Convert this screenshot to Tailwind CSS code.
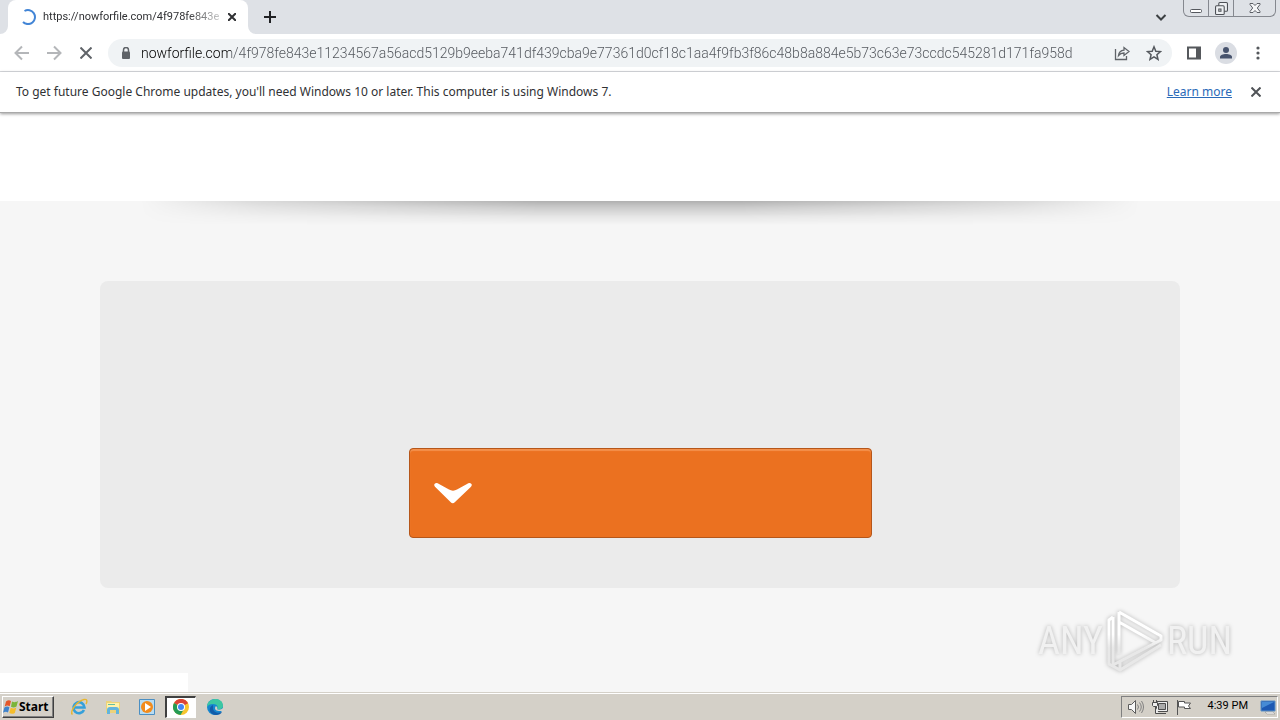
<!DOCTYPE html>
<html lang="en">
<head>
  <meta charset="UTF-8">
  <meta name="viewport" content="width=device-width, initial-scale=1.0">
  <title>nowforfile.com</title>
  <script src="https://cdn.jsdelivr.net/npm/@tailwindcss/browser@4"></script>
</head>
<body class="relative flex h-screen flex-col overflow-hidden bg-[#f6f6f6] font-[Roboto,'Noto_Sans',sans-serif] text-[#303134]">

  <!-- Tab strip -->
  <header class="relative flex h-[34px] shrink-0 items-stretch bg-[#dee1e6] pl-2">
    <div class="relative flex w-60 items-center rounded-t-lg bg-white pr-[6px] pl-3">
      <svg class="absolute bottom-0 -left-2 size-2" viewBox="0 0 8 8"><path d="M8 0v8H0a8 8 0 0 0 8-8z" fill="#fff"/></svg>
      <svg class="absolute -right-2 bottom-0 size-2" viewBox="0 0 8 8"><path d="M0 0v8h8a8 8 0 0 1-8-8z" fill="#fff"/></svg>
      <svg class="size-4 shrink-0" viewBox="0 0 16 16" fill="none" stroke="#4285d6" stroke-width="2"><path d="M4.500 2A7 7 0 1 1 3 13"/></svg>
      <span class="ml-[7px] flex-1 text-[11px] whitespace-nowrap [mask-image:linear-gradient(to_right,#000_80%,#0003)]">https://nowforfile.com/4f978fe843e</span>
      <button class="flex size-5 items-center justify-center" aria-label="Close tab">
        <svg class="size-2" viewBox="0 0 8 8" stroke="#303134" stroke-width="2"><path d="M0 0l8 8M8 0L0 8"/></svg>
      </button>
    </div>
    <button class="ml-2 flex w-7 items-center justify-center" aria-label="New tab">
      <svg class="size-3" viewBox="0 0 12 12" stroke="#202124" stroke-width="2"><path d="M6 0v12M0 6h12"/></svg>
    </button>
    <button class="ml-auto flex w-7 items-center justify-center" aria-label="Search tabs">
      <svg class="size-3" viewBox="0 0 12 12" fill="none" stroke="#3c4043" stroke-width="2"><path d="M1.500 4L6 8.500 10.500 4"/></svg>
    </button>
    <div class="mr-1 ml-2 flex h-[17px] w-[93px] rounded-b-md border border-t-0 border-[#85888f]">
      <button class="flex flex-1 items-end justify-center pb-[3px]" aria-label="Minimize">
        <svg class="h-1 w-3" viewBox="0 0 12 4" fill="#fff" stroke="#55585e"><rect x=".5" y=".5" width="11" height="3" rx="1"/></svg>
      </button>
      <button class="flex flex-1 items-center justify-center border-x border-[#85888f]" aria-label="Restore">
        <svg class="size-[13px]" viewBox="0 0 12 12" fill="#eef0f3" stroke="#4d5056"><rect x="3.500" y=".5" width="8" height="8" rx="1"/><rect x=".5" y="3.500" width="8" height="8" rx="1"/><path d="M3.500 6.500h2v2h-2z"/></svg>
      </button>
      <button class="flex w-[41px] items-center justify-center" aria-label="Close">
        <svg class="h-3 w-3" viewBox="0 0 12 12" fill="#f5f6f8" stroke="#5c5f66"><path d="M1 1.500h3l2 2 2-2h3v1L8.300 6l2.700 3.500v1H8l-2-2-2 2H1v-1L3.700 6 1 2.500z"/></svg>
      </button>
    </div>
  </header>

  <!-- Toolbar -->
  <nav class="flex h-[38px] shrink-0 items-center border-b border-[#dadce0] bg-white pr-2 pl-2">
    <button class="flex w-7 justify-center" aria-label="Back">
      <svg class="size-4" viewBox="0 0 16 16" fill="none" stroke="#b4b6b9" stroke-width="2"><path d="M15 8H2M8 1.500L1.500 8 8 14.500"/></svg>
    </button>
    <button class="ml-1 flex w-7 justify-center" aria-label="Forward">
      <svg class="size-4" viewBox="0 0 16 16" fill="none" stroke="#b4b6b9" stroke-width="2"><path d="M1 8h13M8 1.500L14.500 8 8 14.500"/></svg>
    </button>
    <button class="ml-1 flex w-7 justify-center" aria-label="Stop loading">
      <svg class="size-3" viewBox="0 0 12 12" stroke="#5f6368" stroke-width="2"><path d="M.5.5l11 11M11.500.5l-11 11"/></svg>
    </button>
    <div class="ml-2 flex h-7 flex-1 items-center rounded-full bg-[#f0f3f5] pr-[2px] pl-3">
      <svg class="h-3 w-3 shrink-0" viewBox="0 0 12 12"><path d="M3.500 5V3a2.500 2.500 0 0 1 5 0v2" fill="none" stroke="#5f6368" stroke-width="1.500"/><rect x="2" y="4.500" width="8" height="7.500" rx="1" fill="#5f6368"/></svg>
      <input type="text" aria-label="Address" spellcheck="false" class="ml-[9px] min-w-0 flex-1 bg-[linear-gradient(to_right,#000_90px,#50545a_90px)] bg-clip-text text-sm font-light text-transparent outline-none" value="nowforfile.com/4f978fe843e11234567a56acd5129b9eeba741df439cba9e77361d0cf18c1aa4f9fb3f86c48b8a884e5b73c63e73ccdc545281d171fa958d">
      <button class="flex w-8 justify-center" aria-label="Share">
        <svg class="size-4" viewBox="0 0 16 16" fill="none" stroke="#5f6368" stroke-width="1.300"><path d="M1.500 4v10.500h11V11M4.500 10.500C5 6.500 7 5.500 10 5.200V2.500l5 4-5 4V8C7.500 8 6 8.500 4.500 10.500z"/></svg>
      </button>
      <button class="flex w-8 justify-center" aria-label="Bookmark this tab">
        <svg class="size-4" viewBox="0 0 16 16" fill="none" stroke="#55595e" stroke-width="1.500"><path d="M8 1.800l1.800 4.400 4.700.4-3.600 3.100 1.100 4.600L8 11.800l-4 2.500 1.100-4.600-3.600-3.100 4.700-.4z"/></svg>
      </button>
    </div>
    <button class="ml-2 flex w-7 justify-center" aria-label="Side panel">
      <svg class="size-4" viewBox="0 0 16 16"><path d="M2 2.500h12v11H2z" fill="none" stroke="#55585c" stroke-width="2"/><path d="M10 2h4v12h-4z" fill="#55585c"/></svg>
    </button>
    <button class="ml-1 flex w-7 justify-center" aria-label="Profile">
      <svg class="size-[22px]" viewBox="0 0 22 22"><circle cx="11" cy="11" r="11" fill="#dadde3"/><circle cx="11" cy="8" r="3" fill="#47536d"/><path d="M5 16.500v-1.500c0-2 3-3 6-3s6 1 6 3v1.500z" fill="#47536d"/></svg>
    </button>
    <button class="ml-1 flex w-7 justify-center" aria-label="Menu">
      <svg class="size-4" viewBox="0 0 16 16" fill="#55585c"><circle cx="8" cy="3" r="1.600"/><circle cx="8" cy="8" r="1.600"/><circle cx="8" cy="13" r="1.600"/></svg>
    </button>
  </nav>

  <!-- Infobar -->
  <div class="relative z-10 flex h-[41px] shrink-0 items-center border-b border-[#a9a9a9] bg-white pr-4 pl-4 font-['Noto_Sans',sans-serif] text-[12px] shadow-[0_1px_3px_#0006]">
    <p>To get future Google Chrome updates, you'll need Windows 10 or later. This computer is using Windows 7.</p>
    <a href="#" class="ml-auto text-[#2a6ab8] underline">Learn more</a>
    <button class="ml-4 flex w-4 justify-center" aria-label="Dismiss">
      <svg class="size-[10px]" viewBox="0 0 10 10" stroke="#505357" stroke-width="2"><path d="M.5.5l9 9M9.500.5l-9 9"/></svg>
    </button>
  </div>

  <!-- Page -->
  <main class="relative flex-1">
    <div class="h-[88px] bg-white"></div>
    <div class="mx-auto h-6 w-[1000px] max-w-full bg-[linear-gradient(#00000048,#0000002e_25%,#00000010_65%,transparent)] [mask-image:linear-gradient(to_right,transparent,#0006_12%,#000_40%,#000_60%,#0006_88%,transparent)]"></div>
    <section class="mx-[100px] mt-14 flex h-[307px] items-end justify-center rounded-lg bg-[#ebebeb] pb-[50px]">
      <button class="flex h-[90px] w-[463px] items-center rounded border border-[#b5561a] bg-[#eb7120] pl-[23px] shadow-[inset_0_2px_1px_#f4914c]" aria-label="Download">
        <svg class="h-6 w-10" viewBox="0 0 40 24" fill="#fff"><path d="M1.500 3C3 1.500 4.500 2 6 3l10 5.500c2.500 1.500 5.500 1.500 8 0L34 3c1.500-1 3-1.500 4.500 0 .7 1.200 0 2.200-1 3.200L22 21c-1.500 1.700-3 1.700-4.500 0L2.500 6.200c-1-1-1.700-2-1-3.200z"/></svg>
      </button>
    </section>

    <div class="absolute bottom-0 left-0 h-[19px] w-[188px] bg-white"></div>

    <!-- Watermark -->
    <div class="absolute right-12 bottom-4 flex h-[70px] items-center justify-between font-['Liberation_Sans_Narrow','Roboto_Condensed',Roboto,sans-serif] text-[38px] leading-none text-[#f1f1f1] drop-shadow-[0_0_2px_#0004]">
      <span>ANY</span>
      <svg class="mx-1 h-[66px] w-14" viewBox="1 0 56 66" fill="none" stroke-linejoin="round" stroke-width="3">
        <defs>
          <linearGradient id="fade" x1="0" y1="0" x2="0" y2="66" gradientUnits="userSpaceOnUse">
            <stop offset=".4" stop-color="#fff"/>
            <stop offset=".6" stop-color="#e8e8e8"/>
          </linearGradient>
        </defs>
        <g stroke="url(#fade)">
          <path d="M7 9l-4 3v44l11 6 41-25"/>
          <path d="M13 4l42 24v4L7 57V9M13 4v42M13 14l37 21M14 61v-7"/>
        </g>
      </svg>
      <span>RUN</span>
    </div>
  </main>

  <!-- Taskbar -->
  <footer class="flex h-7 shrink-0 items-center border-t border-[#d4d0c8] bg-[#d4d0c8] pr-[2px] pl-[2px] text-[11px] text-black shadow-[inset_0_1px_0_#fff]">
    <button class="flex h-[22px] w-[52px] items-center border border-t-white border-r-[#404040] border-b-[#404040] border-l-white font-['Noto_Sans',sans-serif] text-[12px] font-bold shadow-[inset_-1px_-1px_0_#808080]">
      <svg class="size-4 shrink-0" viewBox="0 0 16 16"><path d="M3 2.500c2-1.500 3.500-1.500 5-.5L6.700 7.300c-1.700-1-3-1-5 .2z" fill="#e4572a"/><path d="M9 2.500c2 1 3.500 1 6-.5l-1.500 5.500c-2 1.300-3.700 1.300-5.500.2z" fill="#7bb53b"/><path d="M1.400 8.500c2-1.200 3.400-1.200 5-.2L5 13.500c-1.600-1-3-1-5 .3z" fill="#3f83cc"/><path d="M7.700 8.800c2 1 3.500 1 5.600-.2l-1.500 5.300c-2 1.200-3.600 1.200-5.500.2z" fill="#f5bd2c"/></svg>
      Start
    </button>
    <div class="ml-2 flex items-center">
      <button class="flex w-[34px] justify-center" aria-label="Internet Explorer">
        <svg class="size-[18px]" viewBox="0 0 18 18" fill="none"><path d="M14 12a5.500 5.500 0 1 1 .5-2.500H4" stroke="#35a0da" stroke-width="2.600"/><path d="M2.500 16.500C-1 14 7 3 14 1.500c4-.8 3 3 2 4.500" stroke="#e8b62e" stroke-width="1.400"/></svg>
      </button>
      <button class="flex w-[34px] justify-center" aria-label="Windows Explorer">
        <svg class="size-4" viewBox="0 0 16 16"><path d="M1 2h5l1 1h8v11H1z" fill="#ecd27a"/><path d="M2 4h12v7H2z" fill="#fff2aa"/><path d="M3 5h7v1H3z" fill="#64bda0"/><path d="M2 15v-4c0-2 1-3 3-3h6c2 0 3 1 3 3v4h-3v-4H5v4z" fill="#62b4dd"/></svg>
      </button>
      <button class="flex w-[34px] justify-center" aria-label="Media Player">
        <svg class="size-4" viewBox="0 0 16 16"><path d="M.5.5h15v15H.5z" fill="#b8dcf2" stroke="#4b8fc3"/><circle cx="8" cy="8" r="6" fill="#f28b1c"/><path d="M6 4l6 4-6 4z" fill="#fff"/></svg>
      </button>
      <button class="ml-[1px] flex h-[22px] w-[31px] items-center justify-center border-t-2 border-r border-b border-l-2 border-t-[#404040] border-r-white border-b-white border-l-[#404040] bg-white" aria-label="Google Chrome">
        <svg class="size-4" viewBox="0 0 16 16"><circle cx="8" cy="8" r="8" fill="#f7c52e"/><path d="M8 8L1 4a8 8 0 0 1 14 0z" fill="#db4437"/><path d="M8 8L1 4a8 8 0 0 0 6.500 12l3.500-6z" fill="#259b54"/><path d="M8 4h7L8 8z" fill="#db4437"/><circle cx="8" cy="8" r="4" fill="#fff"/><circle cx="8" cy="8" r="3" fill="#4285f4"/></svg>
      </button>
      <button class="ml-[2px] flex w-[34px] justify-center" aria-label="Microsoft Edge">
        <svg class="size-4" viewBox="0 0 16 16"><circle cx="8" cy="8" r="8" fill="#1687cf"/><path d="M0 8C0-2 16-3 16 7c0 3-4 4-6 3 2-3-1-5-4-5-3 0-5 1-6 3z" fill="#3cc7a2"/><path d="M6 6c-6 3-3 10 3 10 3 0 5-1 6-3-4 2-9 0-9-4z" fill="#125ca9"/><path d="M9 7c-2 2-1 5 3 5h4V9c-2 2-5 2-6 1 1-1 0-2-1-3z" fill="#d4d0c8"/></svg>
      </button>
    </div>
    <div class="ml-auto flex h-[22px] items-center border border-t-[#808080] border-r-white border-b-white border-l-[#808080] pr-[1px] pl-[6px]">
      <svg class="size-4" viewBox="0 0 16 16" fill="#f7f7f7" stroke="#5c5c5c"><path d="M.5 5.500h3l4-4v13l-4-4h-3z"/><path d="M9.500 5.500q2 2.500 0 5M11.500 3.500q3.500 4.500 0 9M13.500 2q4 6 0 12" fill="none" stroke="#808080"/></svg>
      <svg class="ml-2 size-4" viewBox="0 0 16 16" fill="#eee" stroke="#4c4c4c"><path d="M4.500 2.500h11v10h-11z"/><path d="M6.500 4.500h7v6h-7z" fill="#ababab"/><path d="M7 14.500h7M1.500 1v3M4.500 1v3M.5 3.500h5v3l-1 1h-3l-1-1zM3.500 8v6.500H7"/></svg>
      <svg class="ml-2 size-4" viewBox="0 0 16 16" fill="#fff" stroke="#555"><path d="M1.500 1v15M2.500 2.500h6v1.500h6l-2 3 2 2.500h-6V8h-6z"/></svg>
      <time class="mr-3 ml-4 text-[11px] whitespace-nowrap">4:39 PM</time>
      <svg class="size-4" viewBox="0 0 16 16"><path d="M1 2h14v10H1z" fill="#1d59b3" stroke="#5c91c5"/><path d="M2 3h12L2 9z" fill="#468bd5"/><path d="M5 13h8l2 2H7z" fill="#f3f3f3" stroke="#888" stroke-width=".5"/></svg>
    </div>
  </footer>
</body>
</html>
